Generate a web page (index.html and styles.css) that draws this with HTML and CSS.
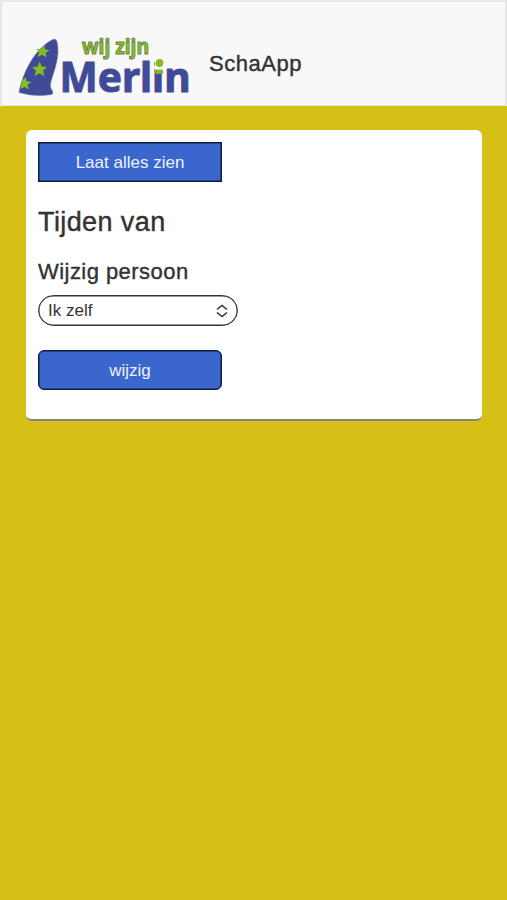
FILE: index.html
```html
<!DOCTYPE html>
<html lang="nl">
<head>
<meta charset="utf-8">
<title>SchaApp</title>
<link rel="stylesheet" href="styles.css">
</head>
<body>
<header class="topbar">
  <svg class="logo" width="174" height="64" viewBox="17 34 174 64" role="img" aria-label="wij zijn Merlin">
    <path class="hat" d="M54 39.300C43 43 25 62 19 92.500Q34 97 51.500 94.500Q53.500 94 52.500 91Q49.500 88 50.800 82C54 71 60 57 57.300 43Q56.500 38.500 54 39.300Z"/>
    <g class="stars">
      <path d="M44.500 45L45.200 49.500L49.800 50.300L45.700 52.700L46.500 57.500L42.300 54.700L37.600 57.100L39.200 52.200L36.300 49L41.300 49Z"/>
      <path d="M39.700 61.500L41.700 66.500L47 67L43 70.700L44.500 76.300L39.500 73.300L34.500 76L36 70.700L32.200 67.200L37.600 66.600Z"/>
      <path d="M25.500 77L26.700 81.200L31.500 82L27.500 84.700L29 89.500L24.800 87L20.500 88.700L21.800 81.500L22.500 78.500L24 79.500Z"/>
    </g>
    <text class="tagline" x="82" y="53.500" textLength="67" lengthAdjust="spacingAndGlyphs">wij zijn</text>
    <text class="brand" x="59.500" y="92.400" textLength="131" lengthAdjust="spacingAndGlyphs">Merlin</text>
    <rect class="cover" x="155" y="58" width="9.500" height="12"/>
    <circle class="dot" cx="159.500" cy="63" r="3.900"/>
    <rect class="dot" x="155.300" y="69.600" width="7.700" height="4.200"/>
  </svg>
  <span class="title">SchaApp</span>
</header>
<main class="card">
  <button class="button">Laat alles zien</button>
  <h2>Tijden van</h2>
  <h3>Wijzig persoon</h3>
  <div class="select">
    <span>Ik zelf</span>
    <svg width="12" height="14" viewBox="0 0 12 14"><path d="M1 5.500L6 1.500L11 5.500M1 8.500L6 12.500L11 8.500"/></svg>
  </div>
  <button class="button rounded">wijzig</button>
</main>
</body>
</html>
```
FILE: styles.css
```css
* { box-sizing: border-box; }
body {
  margin: 0;
  min-height: 900px;
  background: #d6c017;
  color: #333;
  font-family: "Liberation Sans", Arial, sans-serif;
}
.topbar {
  display: flex;
  height: 106px;
  padding: 32px 0 0 15px;
  background: #f8f8f8;
  border: 2px solid #e7e7e7;
  border-bottom-width: 1px;
}
.logo { flex: none; overflow: visible; }
.hat { fill: #414a98; stroke: #68739b; stroke-width: .6; }
.stars, .dot { fill: #84bd20; }
.cover { fill: #f8f8f8; }
.brand {
  font: 700 41px "Noto Sans", sans-serif;
  fill: #414a98;
  stroke: #414a98;
  stroke-width: 1;
  stroke-linejoin: round;
}
.tagline {
  font: 700 22px "Noto Sans", sans-serif;
  fill: #8dc321;
  stroke: #65834e;
  stroke-width: 1;
  stroke-linejoin: round;
}
.title {
  margin: 17px 0 0 18px;
  font-size: 22px;
  line-height: 26px;
  letter-spacing: .55px;
  -webkit-text-stroke: .4px #333;
}
.card {
  display: flex;
  flex-direction: column;
  align-items: flex-start;
  width: 456px;
  height: 291px;
  margin: 24px 0 0 26px;
  padding: 12px;
  background: #fff;
  border-bottom: 2px solid #85857a;
  border-radius: 6px;
}
.button {
  width: 184px;
  height: 40px;
  padding: 2px 0 0;
  background: #3b66ce;
  border: 1px solid #101c3c;
  box-shadow: inset 0 0 0 .5px #101c3c;
  color: #edf2ff;
  font: 17px "Liberation Sans", Arial, sans-serif;
}
.rounded { border-radius: 6px; }
h2, h3 { margin: 0; font-weight: 400; -webkit-text-stroke: .4px #333; }
h2 { margin-top: 24px; font-size: 27px; line-height: 32px; letter-spacing: .4px; }
h3 { margin-top: 21px; font-size: 22px; line-height: 26px; letter-spacing: .45px; }
.select {
  display: flex;
  align-items: center;
  justify-content: space-between;
  width: 200px;
  height: 31px;
  margin: 10px 0 24px;
  padding: 0 9px;
  border: 1px solid #333;
  box-shadow: inset 0 0 0 .5px #333;
  border-radius: 16px;
  font-size: 17px;
}
.select span { padding-top: 1px; }
.select path { fill: none; stroke: #333; stroke-width: 1.6; }
```
